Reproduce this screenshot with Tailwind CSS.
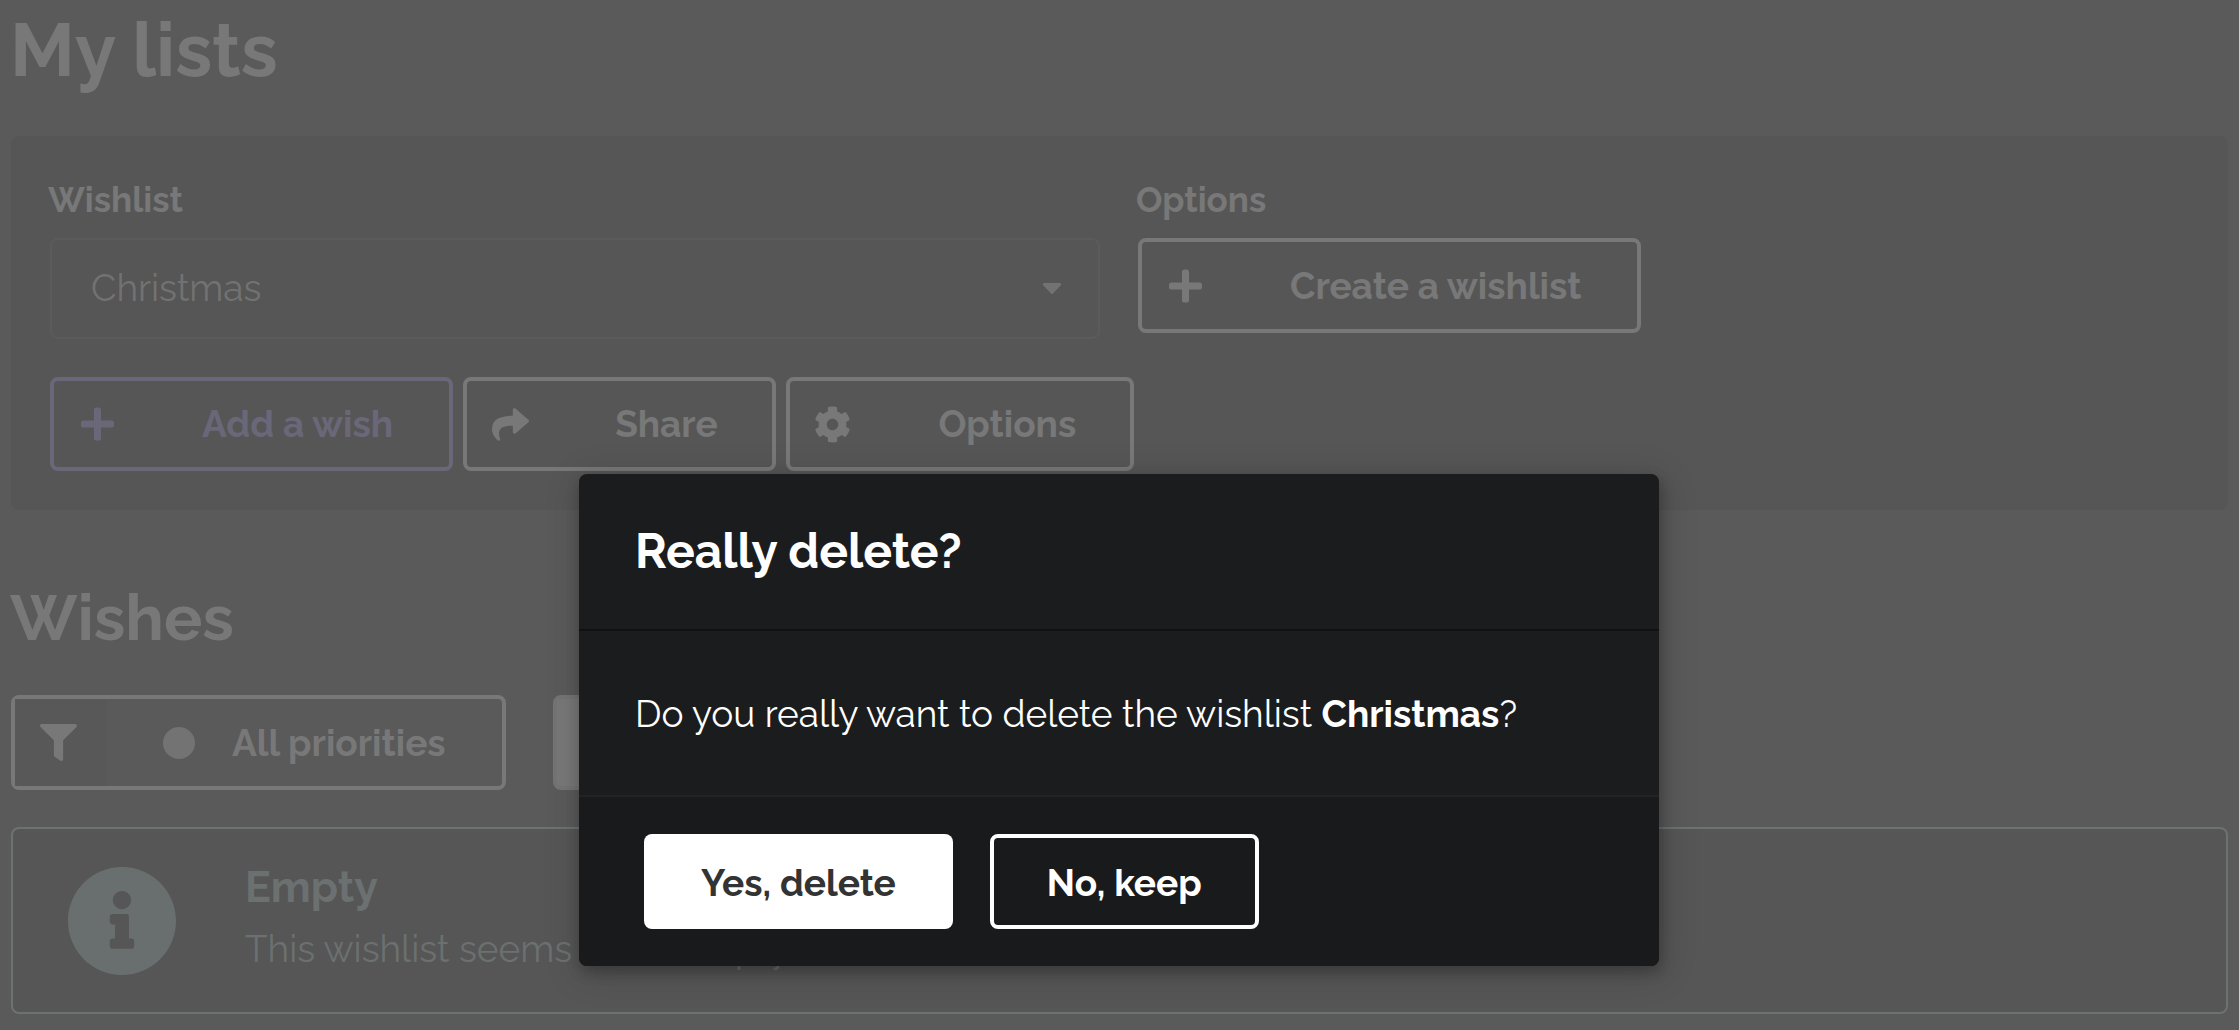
<!DOCTYPE html>
<html lang="en">
<head>
<meta charset="utf-8">
<meta name="viewport" content="width=device-width, initial-scale=1">
<title>My lists</title>
<script src="https://cdn.jsdelivr.net/npm/@tailwindcss/browser@4"></script>
</head>
<body class="bg-[#5a5a5a] font-['Raleway','Open_Sans',sans-serif] text-[37px] leading-[52px] text-[#787878]">
<main class="min-h-screen px-[11px]">
  <h1 class="-ml-px pt-[2px] text-[75px] leading-[96px] font-bold">My lists</h1>

  <section class="mt-[38px] rounded-lg bg-[#565656] pt-[38px] pr-[40px] pb-[39px] pl-[39px]">
    <div class="flex items-start gap-[38px]">
      <div class="flex w-1/2 flex-col">
        <label for="wishlist" class="-ml-[2px] text-[35px] leading-[52px] font-bold">Wishlist</label>
        <div class="relative mt-[12px]">
          <select id="wishlist" class="block h-[101px] w-full appearance-none rounded-lg border-2 border-[#5b5b5b] bg-transparent pr-20 pb-[2px] pl-[39px] text-[#727272]">
            <option>Christmas</option>
          </select>
          <svg class="pointer-events-none absolute top-[45px] right-[38px] h-[12px] w-[20px]" viewBox="0 0 20 12" fill="#727272"><path d="M2 0h16q2 .6 .8 2.200L11 10.500q-1 1-2 0L1.200 2.200Q0 .6 2 0z"/></svg>
        </div>
      </div>
      <div class="flex w-1/2 flex-col items-start">
        <span class="-ml-[2px] text-[35px] leading-[52px] font-bold">Options</span>
        <button class="mt-[12px] flex h-[95px] items-center rounded-lg border-4 border-[#787878] pr-[56px] font-bold">
          <span class="flex w-[92px] justify-center pr-[6px]">
            <svg class="h-[38px] w-[33px]" viewBox="0 0 448 512" fill="currentColor"><path d="M416 208H272V64c0-17.670-14.330-32-32-32h-32c-17.670 0-32 14.330-32 32v144H32c-17.670 0-32 14.330-32 32v32c0 17.670 14.330 32 32 32h144v144c0 17.670 14.330 32 32 32h32c17.670 0 32-14.330 32-32V304h144c17.670 0 32-14.330 32-32v-32c0-17.670-14.330-32-32-32z"/></svg>
          </span>
          <span class="pl-[56px]">Create a wishlist</span>
        </button>
      </div>
    </div>

    <div class="mt-[38px] flex gap-[10px]">
      <button class="flex h-[94px] items-center rounded-lg border-4 border-[#6a6779] pr-[56px] font-bold text-[#6a6779]">
        <span class="flex w-[92px] justify-center pr-[6px]">
          <svg class="h-[38px] w-[33px]" viewBox="0 0 448 512" fill="currentColor"><path d="M416 208H272V64c0-17.670-14.330-32-32-32h-32c-17.670 0-32 14.330-32 32v144H32c-17.670 0-32 14.330-32 32v32c0 17.670 14.330 32 32 32h144v144c0 17.670 14.330 32 32 32h32c17.670 0 32-14.330 32-32V304h144c17.670 0 32-14.330 32-32v-32c0-17.670-14.330-32-32-32z"/></svg>
        </span>
        <span class="pl-[56px]">Add a wish</span>
      </button>
      <button class="flex h-[94px] items-center rounded-lg border-4 border-[#787878] pr-[54px] font-bold">
        <span class="flex w-[92px] justify-center pr-[6px]">
          <svg class="h-[37px] w-[37px]" viewBox="0 0 512 512" fill="currentColor"><path d="M503.691 189.836L327.687 37.851C312.281 24.546 288 35.347 288 56.015v80.053C127.371 137.907 0 170.100 0 322.326c0 61.441 39.581 122.309 83.333 154.132 13.653 9.931 33.111-2.533 28.077-18.631C66.066 312.814 132.917 274.316 288 272.085V360c0 20.700 24.300 31.453 39.687 18.164l176.004-152c11.071-9.562 11.086-26.753 0-36.328z"/></svg>
        </span>
        <span class="pl-[56px]">Share</span>
      </button>
      <button class="flex h-[94px] items-center rounded-lg border-4 border-[#787878] pr-[54px] font-bold">
        <span class="flex w-[92px] justify-center pr-[6px]">
          <svg class="h-[37px] w-[37px]" viewBox="0 0 512 512" fill="currentColor"><path d="M487.400 315.700l-42.600-24.600c4.300-23.200 4.300-47 0-70.200l42.600-24.600c4.900-2.800 7.100-8.600 5.500-14-11.100-35.600-30-67.800-54.700-94.600-3.800-4.100-10-5.100-14.800-2.300L380.800 110c-17.900-15.400-38.500-27.300-60.800-35.100V25.800c0-5.600-3.900-10.500-9.400-11.700-36.700-8.200-74.300-7.800-109.200 0-5.500 1.200-9.400 6.100-9.400 11.700V75c-22.200 7.900-42.800 19.800-60.800 35.100L88.700 85.500c-4.900-2.800-11-1.900-14.800 2.300-24.700 26.700-43.600 58.900-54.700 94.600-1.700 5.400.6 11.200 5.500 14L67.300 221c-4.300 23.200-4.300 47 0 70.200l-42.600 24.600c-4.900 2.800-7.100 8.600-5.500 14 11.100 35.600 30 67.800 54.700 94.600 3.800 4.100 10 5.100 14.800 2.300l42.600-24.600c17.900 15.400 38.500 27.300 60.800 35.100v49.200c0 5.600 3.900 10.500 9.400 11.700 36.700 8.200 74.300 7.800 109.200 0 5.500-1.200 9.400-6.100 9.400-11.700v-49.200c22.200-7.900 42.800-19.800 60.800-35.100l42.600 24.600c4.900 2.800 11 1.900 14.800-2.300 24.700-26.700 43.600-58.900 54.700-94.600 1.500-5.500-.7-11.300-5.600-14.100zM256 336c-44.100 0-80-35.900-80-80s35.900-80 80-80 80 35.900 80 80-35.900 80-80 80z"/></svg>
        </span>
        <span class="pl-[57px]">Options</span>
      </button>
    </div>
  </section>

  <h2 class="-ml-px mt-[66px] text-[64px] leading-[84px] font-bold">Wishes</h2>

  <div class="mt-[35px] flex gap-[47px]">
    <button class="flex h-[95px] items-center rounded-lg border-4 border-[#787878] pr-[56px] font-bold">
      <span class="flex h-full w-[92px] items-center justify-center bg-[#585858] pr-[6px]">
        <svg class="h-[37px] w-[37px]" viewBox="0 0 512 512" fill="currentColor"><path d="M487.976 0H24.028C2.710 0-8.047 25.866 7.058 40.971L192 225.941V432c0 7.831 3.821 15.170 10.237 19.662l80 55.980C298.020 518.690 320 507.493 320 487.980V225.941l184.947-184.970C520.021 25.896 509.338 0 487.976 0z"/></svg>
      </span>
      <span class="ml-[56px] size-[32px] rounded-full bg-[#737373]"></span>
      <span class="ml-[37px]">All priorities</span>
    </button>
    <button aria-label="Apply filter" class="h-[95px] w-[160px] rounded-lg border-4 border-[#747474] bg-[#787878]"></button>
  </div>

  <section class="mt-[37px] flex h-[187px] items-center rounded-lg border-2 border-[#6c7271] bg-[#565656] pl-[55px] text-[#6b7070]">
    <svg class="size-[108px] shrink-0" viewBox="8 8 496 496" fill="#696e6f"><path d="M256 8C119.043 8 8 119.083 8 256c0 136.997 111.043 248 248 248s248-111.003 248-248C504 119.083 392.957 8 256 8zm0 110c23.196 0 42 18.804 42 42s-18.804 42-42 42-42-18.804-42-42 18.804-42 42-42zm56 254c0 6.627-5.373 12-12 12h-88c-6.627 0-12-5.373-12-12v-24c0-6.627 5.373-12 12-12h12v-64h-12c-6.627 0-12-5.373-12-12v-24c0-6.627 5.373-12 12-12h64c6.627 0 12 5.373 12 12v100h12c6.627 0 12 5.373 12 12v24z"/></svg>
    <div class="ml-[69px] pb-[7px]">
      <h3 class="text-[43px] leading-[60px] font-bold">Empty</h3>
      <p class="mt-[4px] leading-[56px]">This wishlist seems to be empty.</p>
    </div>
  </section>
</main>

<div role="dialog" aria-modal="true" aria-labelledby="dialog-title" class="absolute top-[474px] left-[579px] w-[1080px] overflow-hidden rounded-lg bg-[#1b1c1d] text-white shadow-[2px_6px_14px_0_rgba(0,0,0,0.25),2px_6px_36px_2px_rgba(0,0,0,0.15)]">
  <h2 id="dialog-title" class="border-b-2 border-[#101112] px-[56px] pt-[47px] pb-[48px] text-[48px] leading-[60px] font-bold">Really delete?</h2>
  <p class="px-[56px] pt-[57px] pb-[55px]">Do you really want to delete the wishlist <b class="font-bold">Christmas</b>?</p>
  <div class="flex gap-[37px] border-t-2 border-[#222324] bg-[#191a1b] px-[65px] pt-[37px] pb-[37px]">
    <button class="h-[95px] rounded-lg bg-white px-[57px] pt-[2px] font-bold text-[#333333]">Yes, delete</button>
    <button class="h-[95px] rounded-lg border-4 border-white px-[53px] pt-[2px] font-bold">No, keep</button>
  </div>
</div>
</body>
</html>
